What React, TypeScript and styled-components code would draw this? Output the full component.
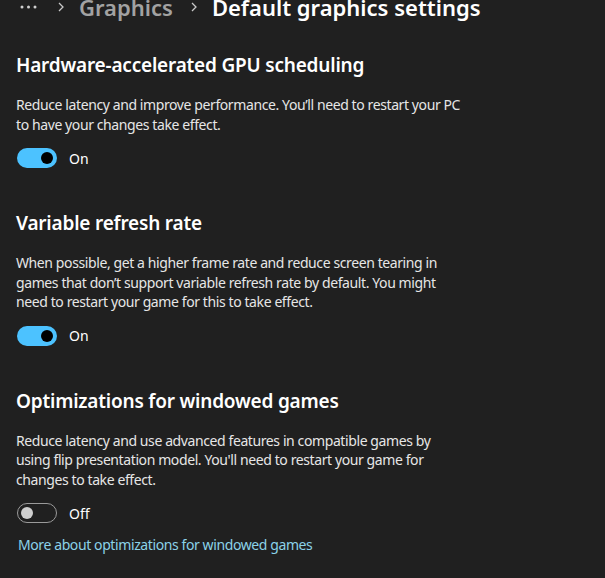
import styled, { createGlobalStyle } from 'styled-components';

const GlobalStyle = createGlobalStyle`
  html, body {
    margin: 0;
    padding: 0;
    background: #202020;
  }
  body {
    font-family: 'Noto Sans', 'Open Sans', sans-serif;
    color: #ffffff;
    -webkit-font-smoothing: antialiased;
  }
`;

const Page = styled.div`
  width: 605px;
  height: 578px;
  overflow: hidden;
  background: #202020;
  padding: 0 16px;
  box-sizing: border-box;
`;

const Breadcrumb = styled.div`
  display: flex;
  align-items: center;
  height: 28px;
  margin-top: -7px;
  font-size: 22px;
  font-weight: 600;
  line-height: 28px;
  white-space: nowrap;
`;

const Dots = styled.svg`
  margin-left: 4px;
  margin-right: 21px;
`;

const Chevron = styled.svg`
  margin-right: 15px;
`;

const Crumb = styled.span<{ $current?: boolean }>`
  color: ${(p) => (p.$current ? '#ffffff' : '#a2a2a2')};
  margin-right: ${(p) => (p.$current ? '0' : '18px')};
`;

const Section = styled.section`
  margin-top: 41px;
  &:first-of-type {
    margin-top: 30px;
  }
`;

const Heading = styled.h2`
  margin: 0 0 16px;
  font-size: 19px;
  font-weight: 600;
  line-height: 28px;
  letter-spacing: -0.2px;
`;

const Description = styled.p`
  margin: 0 0 14px;
  max-width: 449px;
  font-size: 14px;
  line-height: 19.5px;
  letter-spacing: -0.4px;
  color: #e6e6e6;
`;

const ToggleRow = styled.label`
  display: flex;
  align-items: center;
  gap: 12px;
  height: 20px;
  padding-left: 1px;
  font-size: 14px;
  color: #ffffff;
`;

const Track = styled.span<{ $on: boolean }>`
  position: relative;
  width: 40px;
  height: 20px;
  box-sizing: border-box;
  border-radius: 10px;
  background: ${(p) => (p.$on ? '#4cc2ff' : 'transparent')};
  border: ${(p) => (p.$on ? 'none' : '1px solid #9a9a9a')};
`;

const Knob = styled.span<{ $on: boolean }>`
  position: absolute;
  top: 50%;
  width: 12px;
  height: 12px;
  border-radius: 50%;
  transform: translateY(-50%);
  background: ${(p) => (p.$on ? '#000000' : '#cfcfcf')};
  left: ${(p) => (p.$on ? '24px' : '3px')};
`;

const Link = styled.a`
  display: block;
  margin-top: 12px;
  padding-left: 2px;
  font-size: 14px;
  line-height: 20px;
  letter-spacing: -0.4px;
  color: #8bd2e8;
  text-decoration: none;
`;

const Toggle = ({ on }: { on: boolean }) => (
  <ToggleRow>
    <Track $on={on}>
      <Knob $on={on} />
    </Track>
    {on ? 'On' : 'Off'}
  </ToggleRow>
);

const ChevronIcon = () => (
  <Chevron width="6" height="10" viewBox="0 0 6 10">
    <path d="M1 1 L5 5 L1 9" fill="none" stroke="#c8c8c8" strokeWidth="1.3" />
  </Chevron>
);

const settings = [
  {
    title: 'Hardware-accelerated GPU scheduling',
    text: 'Reduce latency and improve performance. You\u2019ll need to restart your PC to have your changes take effect.',
    on: true,
  },
  {
    title: 'Variable refresh rate',
    text: 'When possible, get a higher frame rate and reduce screen tearing in games that don\u2019t support variable refresh rate by default. You might need to restart your game for this to take effect.',
    on: true,
  },
  {
    title: 'Optimizations for windowed games',
    text: "Reduce latency and use advanced features in compatible games by using flip presentation model. You'll need to restart your game for changes to take effect.",
    on: false,
  },
];

export default function App() {
  return (
    <>
      <GlobalStyle />
      <Page>
        <Breadcrumb>
          <Dots width="17" height="4" viewBox="0 0 17 4">
            <circle cx="2" cy="2" r="1.5" fill="#cfcfcf" />
            <circle cx="8.5" cy="2" r="1.5" fill="#cfcfcf" />
            <circle cx="15" cy="2" r="1.5" fill="#cfcfcf" />
          </Dots>
          <ChevronIcon />
          <Crumb>Graphics</Crumb>
          <ChevronIcon />
          <Crumb $current>Default graphics settings</Crumb>
        </Breadcrumb>
        {settings.map((s) => (
          <Section key={s.title}>
            <Heading>{s.title}</Heading>
            <Description>{s.text}</Description>
            <Toggle on={s.on} />
          </Section>
        ))}
        <Link href="#">More about optimizations for windowed games</Link>
      </Page>
    </>
  );
}
